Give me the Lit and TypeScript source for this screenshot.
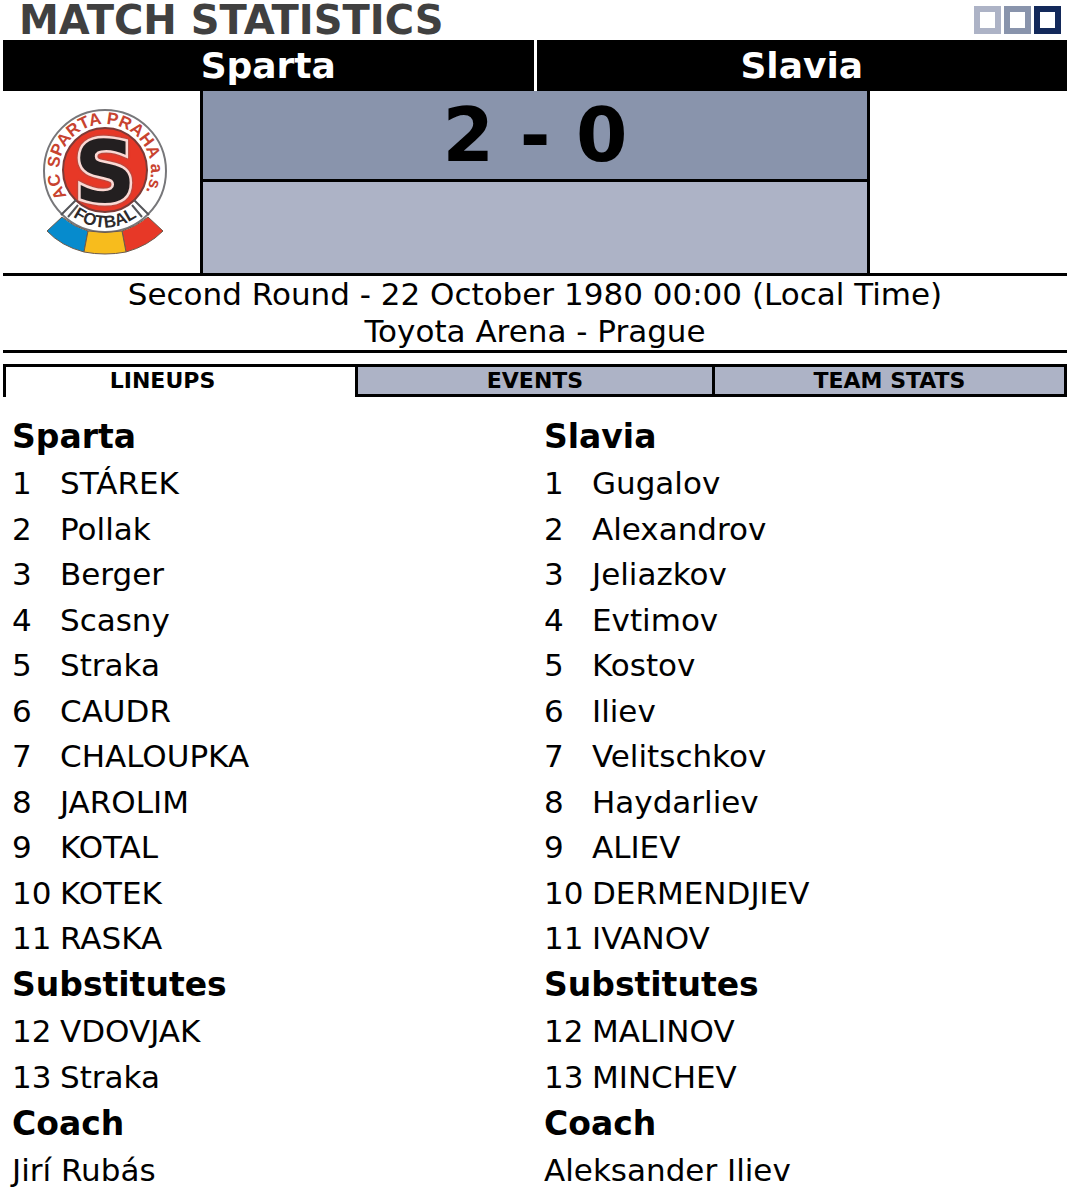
import { LitElement, html, css, svg } from "lit";
import { customElement, property, state } from "lit/decorators.js";

interface Player {
  no: number;
  name: string;
}

interface Team {
  name: string;
  starters: Player[];
  substitutes: Player[];
  coach: string;
}

const numbered = (names: string[], first = 1): Player[] =>
  names.map((name, i) => ({ no: first + i, name }));

const TEAMS: Team[] = [
  {
    name: "Sparta",
    starters: numbered([
      "STÁREK", "Pollak", "Berger", "Scasny", "Straka", "CAUDR",
      "CHALOUPKA", "JAROLIM", "KOTAL", "KOTEK", "RASKA",
    ]),
    substitutes: numbered(["VDOVJAK", "Straka"], 12),
    coach: "Jirí Rubás",
  },
  {
    name: "Slavia",
    starters: numbered([
      "Gugalov", "Alexandrov", "Jeliazkov", "Evtimov", "Kostov", "Iliev",
      "Velitschkov", "Haydarliev", "ALIEV", "DERMENDJIEV", "IVANOV",
    ]),
    substitutes: numbered(["MALINOV", "MINCHEV"], 12),
    coach: "Aleksander Iliev",
  },
];

const TABS = ["LINEUPS", "EVENTS", "TEAM STATS"];

@customElement("club-crest")
class ClubCrest extends LitElement {
  static styles = css`
    :host { display: block; }
    .crest { display: block; width: 124px; height: 146px; }
    .ring { fill: #fff; stroke: #77777a; stroke-width: 2; }
    .disc { fill: #e73827; stroke: #7d3a36; stroke-width: 2; }
    .letter {
      font: bold 86px "DejaVu Sans", sans-serif;
      text-anchor: middle;
      fill: #231f20;
      stroke: #fbd9d4;
      stroke-width: 5;
      paint-order: stroke;
      filter: drop-shadow(0 0 1px #6b6466);
    }
    .motto { font: bold 17px "Liberation Sans", sans-serif; fill: #c8432f; }
    .sport { font: bold 17px "Liberation Sans", sans-serif; fill: #2d2a2b; text-anchor: middle; }
    .blue { fill: #068bcd; }
    .gold { fill: #f7bc1d; }
    .red { fill: #e73827; }
    .ribbon { stroke: #6b5a4c; stroke-width: 1; }
    .fold { stroke: #55565a; stroke-width: 2; fill: none; }
  `;

  render() {
    return html`<svg class="crest" viewBox="0 0 124 146" role="img">
      ${svg`
        <defs>
          <path id="upper" d="M24 87A46 46 0 1 1 100 87" />
          <path id="lower" d="M20 100Q62 137 104 100" />
        </defs>
        <circle class="ring" cx="62" cy="62" r="61" />
        <circle class="disc" cx="62" cy="61" r="42" />
        <text class="motto"><textPath href="#upper">AC SPARTA PRAHA a.s.</textPath></text>
        <path class="fold" d="M18 106L33 91M106 106L91 91M25 108L35 96M99 108L89 96" />
        <text class="sport"><textPath href="#lower" startOffset="50%">FOTBAL</textPath></text>
        <path class="ribbon blue" d="M19 108Q31 118 45 122L41 143Q18 137 4 122Z" />
        <path class="ribbon red" d="M105 108Q93 118 79 122L83 143Q105 137 120 122Z" />
        <path class="ribbon gold" d="M45 122Q62 125 79 122L83 143Q62 147 41 143Z" />
        <text class="letter" x="62" y="93">S</text>
      `}
    </svg>`;
  }
}

@customElement("team-lineup")
class TeamLineup extends LitElement {
  @property({ attribute: false }) team!: Team;

  static styles = css`
    :host { display: block; padding-left: 9px; }
    .heading { margin: 0; font-size: 33px; line-height: 48px; font-weight: bold; }
    .players { width: 100%; border-collapse: collapse; }
    .players td { height: 45px; padding: 0; line-height: 45px; white-space: nowrap; }
    .players tr:nth-child(even) td { height: 46px; }
    .players .no { width: 48px; }
    .coach { margin: 0; line-height: 45px; }
  `;

  private players(list: Player[]) {
    return html`<table class="players">
      <tbody>
        ${list.map((p) => html`<tr><td class="no">${p.no}</td><td>${p.name}</td></tr>`)}
      </tbody>
    </table>`;
  }

  render() {
    const t = this.team;
    return html`
      <h2 class="heading">${t.name}</h2>
      ${this.players(t.starters)}
      <h2 class="heading">Substitutes</h2>
      ${this.players(t.substitutes)}
      <h2 class="heading">Coach</h2>
      <p class="coach">${t.coach}</p>
    `;
  }
}

@customElement("app-root")
class AppRoot extends LitElement {
  @state() private active = 0;

  static styles = css`
    :host {
      display: block;
      min-height: 100vh;
      box-sizing: border-box;
      padding: 0 6px 0 3px;
      background: #fff;
      color: #000;
      font-family: Verdana, "DejaVu Sans", sans-serif;
      font-size: 31px;
    }
    .top {
      display: flex;
      justify-content: space-between;
      align-items: center;
      height: 40px;
      padding: 0 6px 0 16px;
    }
    .title { margin: 0; font-size: 40px; line-height: 40px; font-weight: bold; color: #404040; }
    .squares { display: flex; gap: 3px; }
    .square { width: 15px; height: 16px; border: 6px solid #adb3c6; }
    .square.mid { border-color: #8994ac; }
    .square.dark { border-color: #13295a; }
    .teams { display: grid; grid-template-columns: 1fr 1fr; gap: 3px; }
    .team {
      background: #000;
      color: #fff;
      font-size: 36px;
      line-height: 51px;
      font-weight: bold;
      text-align: center;
    }
    .board {
      display: grid;
      grid-template-columns: 197px 1fr 197px;
      border-bottom: 3px solid #000;
    }
    .badge { display: flex; justify-content: center; align-items: center; padding-left: 6px; }
    .middle { border: solid #000; border-width: 0 3px; }
    .score {
      background: #8994ac;
      border-bottom: 3px solid #000;
      font-size: 74px;
      line-height: 88px;
      font-weight: bold;
      text-align: center;
    }
    .scorers { height: 91px; background: #adb3c6; }
    .info {
      border-bottom: 3px solid #000;
      line-height: 37px;
      text-align: center;
    }
    .info p { margin: 0; }
    .tabs {
      display: grid;
      grid-template-columns: 349fr 357fr 352fr;
      margin-top: 11px;
      border: solid #000;
      border-width: 3px 3px 0;
    }
    .tab {
      padding: 0;
      border: solid #000;
      border-width: 0 0 3px 3px;
      background: #adb3c6;
      color: #000;
      font: bold 22px/27px "DejaVu Sans", sans-serif;
    }
    .tab:first-child { border-left-width: 0; padding-right: 36px; }
    .tab.active { background: #fff; border-bottom-color: #fff; }
    .lineups {
      display: grid;
      grid-template-columns: 1fr 1fr;
      padding-top: 16px;
    }
  `;

  render() {
    return html`
      <header class="top">
        <h1 class="title">MATCH STATISTICS</h1>
        <div class="squares">
          <span class="square"></span>
          <span class="square mid"></span>
          <span class="square dark"></span>
        </div>
      </header>
      <div class="teams">
        ${TEAMS.map((t) => html`<div class="team">${t.name}</div>`)}
      </div>
      <section class="board">
        <div class="badge"><club-crest></club-crest></div>
        <div class="middle">
          <div class="score">2 - 0</div>
          <div class="scorers"></div>
        </div>
        <div></div>
      </section>
      <section class="info">
        <p>Second Round - 22 October 1980 00:00 (Local Time)</p>
        <p>Toyota Arena - Prague</p>
      </section>
      <nav class="tabs" role="tablist">
        ${TABS.map(
          (label, i) => html`<button
            class="tab ${i === this.active ? "active" : ""}"
            role="tab"
            aria-selected=${i === this.active}
            @click=${() => (this.active = i)}
          >${label}</button>`
        )}
      </nav>
      ${this.active === 0
        ? html`<main class="lineups">
            ${TEAMS.map((t) => html`<team-lineup .team=${t}></team-lineup>`)}
          </main>`
        : ""}
    `;
  }
}
